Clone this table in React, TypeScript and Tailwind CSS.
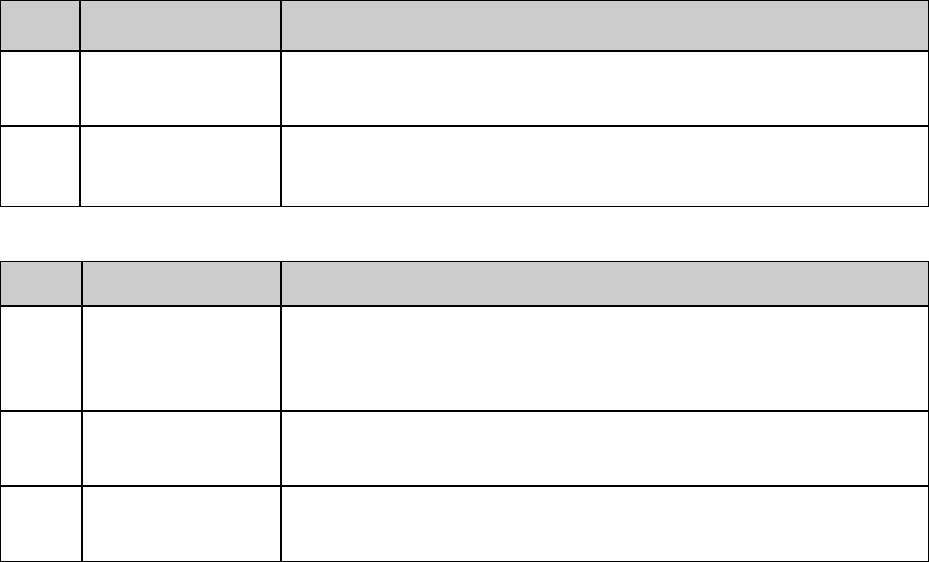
import React from 'react';

interface TableSpec {
  cols: string[];
  rows: string[];
}

// column widths and row heights are measured off the layout, borders included
const first: TableSpec = {
  cols: ['w-[80px]', 'w-[201px]', 'w-[648px]'],
  rows: ['h-[51px]', 'h-[75px]', 'h-[81px]'],
};

const second: TableSpec = {
  cols: ['w-[82px]', 'w-[199px]', 'w-[648px]'],
  rows: ['h-[45px]', 'h-[105px]', 'h-[75px]', 'h-[76px]'],
};

const EmptyTable: React.FC<{ spec: TableSpec }> = ({ spec }) => {
  return (
    <div className="flex flex-col">
      {spec.rows.map((h, r) => (
        <div key={r} className={`flex ${h}`}>
          {spec.cols.map((w, c) => (
            <div
              key={c}
              className={`${w} h-full border border-black ${r === 0 ? 'bg-[#cccccc]' : 'bg-white'}`}
            />
          ))}
        </div>
      ))}
    </div>
  );
};

export default function App() {
  return (
    <div className="w-[929px] h-[562px] bg-white overflow-hidden flex flex-col gap-[54px]">
      <EmptyTable spec={first} />
      <EmptyTable spec={second} />
    </div>
  );
}
